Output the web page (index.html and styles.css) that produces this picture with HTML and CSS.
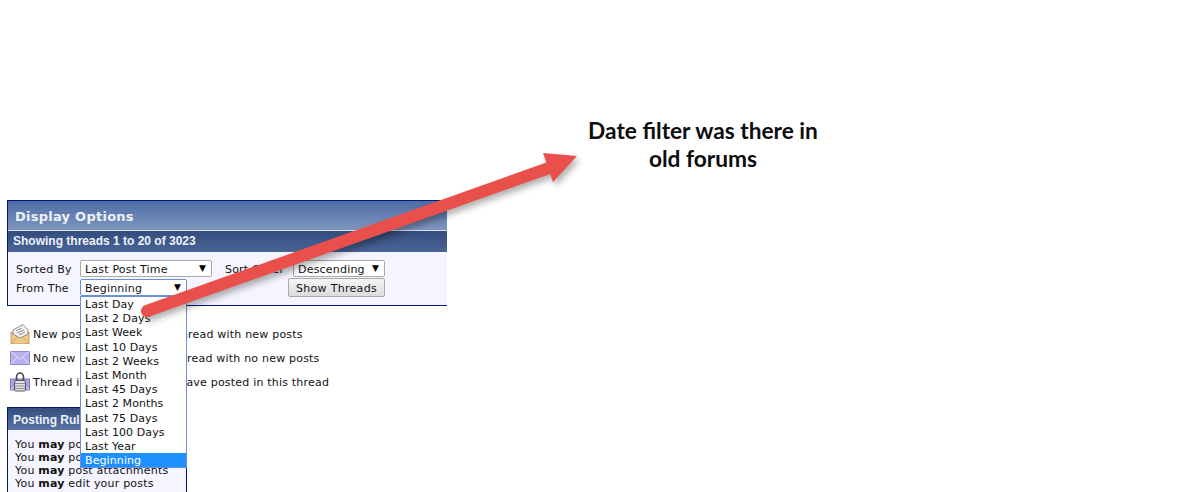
FILE: index.html
```html
<!DOCTYPE html>
<html lang="en">
<head>
  <meta charset="UTF-8" />
  <title>Display Options</title>
  <link rel="stylesheet" href="styles.css">
</head>
<body>
  <div class="page">
    <div class="panel display-options">
      <div class="panel-title">Display Options</div>
      <div class="panel-sub">Showing threads 1 to 20 of 3023</div>
      <div class="panel-body">
        <div class="form-row">
          <span class="label">Sorted By</span>
          <div class="select select-sort"><span>Last Post Time</span><span class="caret">▼</span></div>
          <span class="label label-order">Sort Order</span>
          <div class="select select-order"><span>Descending</span><span class="caret">▼</span></div>
        </div>
        <div class="form-row form-row-second">
          <span class="label">From The</span>
          <div class="select select-from"><span>Beginning</span><span class="caret">▼</span></div>
          <button class="show-btn">Show Threads</button>
        </div>
      </div>
    </div>

    <div class="legend">
      <div class="legend-row">
        <svg class="legend-icon" viewBox="0 0 20 20">
          <path d="M1 8 L10 13 L19 8 L19 20 L1 20 Z" fill="#eec98a" stroke="#b58d50" stroke-width="0.8"/>
          <path d="M3 6 L13 0.5 L18 6 L18 10 L10 14 L3 10 Z" fill="#f2f2ee" stroke="#777" stroke-width="0.8"/>
          <path d="M6 7 L12 4 M7 9 L14 6 M9 11 L15 8" stroke="#8a8a8a" stroke-width="1"/>
          <path d="M1 20 L8 12 M19 20 L12 12" stroke="#c9a263" stroke-width="0.8"/>
        </svg>
        <span class="legend-key">New posts</span>
        <span>Thread with new posts</span>
      </div>
      <div class="legend-row">
        <svg class="legend-icon" viewBox="0 0 20 14">
          <rect x="0.5" y="0.5" width="19" height="13" fill="#b7b2ee" stroke="#8f8ad6"/>
          <path d="M0.5 0.5 L10 8 L19.5 0.5 M0.5 13.5 L7 6 M19.5 13.5 L13 6" fill="none" stroke="#e4e2fb" stroke-width="0.9"/>
        </svg>
        <span class="legend-key legend-key-none">No new</span>
        <span>Thread with no new posts</span>
      </div>
      <div class="legend-row">
        <svg class="legend-icon" viewBox="0 0 20 20">
          <rect x="0.5" y="7" width="19" height="11" fill="#a9a5e6" stroke="#7d79c4"/>
          <path d="M0.5 18 L7 12 M19.5 18 L13 12" fill="none" stroke="#e4e2fb" stroke-width="0.8"/>
          <path d="M6.5 10 V5 A3.5 4 0 0 1 13.5 5 V10" fill="none" stroke="#444" stroke-width="1.6"/>
          <rect x="4.5" y="8.5" width="11" height="10.5" rx="1.5" fill="#e4e4e4" stroke="#555"/>
          <path d="M5 11.5 H15 M5 14 H15 M5 16.5 H15" stroke="#8c8c8c"/>
        </svg>
        <span class="legend-key legend-key-own">Thread is yours</span>
        <span>You have posted in this thread</span>
      </div>
    </div>

    <div class="panel posting-rules">
      <div class="rules-title">Posting Rules</div>
      <div class="rules-body">
        <div>You <b>may</b> post new threads</div>
        <div>You <b>may</b> post replies</div>
        <div>You <b>may</b> post attachments</div>
        <div>You <b>may</b> edit your posts</div>
      </div>
    </div>

    <ul class="dropdown">
      <li>Last Day</li>
      <li>Last 2 Days</li>
      <li>Last Week</li>
      <li>Last 10 Days</li>
      <li>Last 2 Weeks</li>
      <li>Last Month</li>
      <li>Last 45 Days</li>
      <li>Last 2 Months</li>
      <li>Last 75 Days</li>
      <li>Last 100 Days</li>
      <li>Last Year</li>
      <li class="selected">Beginning</li>
    </ul>

    <svg class="arrow" viewBox="0 0 1187 492">
      <path d="M147 311 L549 168" stroke="#e94f4b" stroke-width="12" stroke-linecap="round"/>
      <path d="M577 156 L543 153 L553 182 Z" fill="#e94f4b"/>
    </svg>

    <div class="note">Date filter was there in<br>old forums</div>
  </div>
</body>
</html>
```

FILE: styles.css
```css
html, body {
  margin: 0;
  background-color: #ffffff;
}

.page {
  position: relative;
  height: 492px;
  overflow: hidden;
  padding: 200px 0 0 7px;
  box-sizing: border-box;
  font-family: 'DejaVu Sans', Verdana, sans-serif;
  font-size: 11px;
  letter-spacing: 0.2px;
  color: #111;
}

.panel {
  box-sizing: border-box;
  background-color: #f5f5ff;
  border: 1px solid #00187a;
}

.display-options {
  width: 440px;
  height: 106px;
  border-right: none;
}

.panel-title {
  height: 29px;
  line-height: 31px;
  padding-left: 7px;
  font-size: 13px;
  font-weight: bold;
  letter-spacing: 0.25px;
  color: #eef1f8;
  background: linear-gradient(#4d6ca7, #7f96bd);
  border-bottom: 1px solid #dfe5f0;
}

.panel-sub {
  height: 21px;
  line-height: 21px;
  padding-left: 5px;
  font-family: 'Liberation Sans', Arial, sans-serif;
  font-size: 12px;
  font-weight: bold;
  letter-spacing: 0;
  color: #eef1f8;
  background: linear-gradient(#344d7e, #4a6496);
}

.panel-body {
  padding: 8px 0 0 8px;
}

.form-row {
  display: flex;
  align-items: center;
  height: 17px;
}

.form-row-second {
  margin-top: 2px;
}

.label {
  width: 64px;
  padding-top: 2px;
}

.label-order {
  width: 68px;
  margin-left: 13px;
}

.select {
  display: flex;
  justify-content: space-between;
  align-items: center;
  box-sizing: border-box;
  height: 17px;
  padding: 2px 5px 0 4px;
  background-color: #ffffff;
  border: 1px solid #a9a9a9;
  border-radius: 2px;
}

.select-sort {
  width: 132px;
}

.select-order {
  width: 92px;
}

.select-from {
  width: 107px;
  border-color: #6d8fd8;
}

.caret {
  font-size: 9px;
  line-height: 9px;
  margin-top: -3px;
  color: #000;
}

.show-btn {
  width: 97px;
  height: 19px;
  margin-left: 101px;
  padding: 2px 0 0;
  font-family: inherit;
  font-size: 11px;
  letter-spacing: 0.3px;
  color: #111;
  background: linear-gradient(#f6f6f6, #dcdcdc);
  border: 1px solid #a9a9a9;
  border-radius: 2px;
}

.legend {
  margin: 16px 0 0 3px;
}

.legend-row {
  display: flex;
  align-items: center;
  height: 24px;
}

.legend-icon {
  width: 20px;
  height: 20px;
  margin-right: 3px;
}

.legend-key {
  width: 141px;
}

.legend-key-none {
  width: 140px;
}

.legend-key-own {
  width: 123px;
}

.posting-rules {
  width: 180px;
  height: 120px;
  margin-top: 13px;
}

.rules-title {
  height: 22px;
  line-height: 24px;
  padding-left: 5px;
  font-family: 'Liberation Sans', Arial, sans-serif;
  font-size: 12px;
  font-weight: bold;
  letter-spacing: 0;
  color: #eef1f8;
  background: linear-gradient(#344d7e, #5a74a6);
}

.rules-body {
  padding: 8px 0 0 7px;
  line-height: 13px;
}

.dropdown {
  position: absolute;
  left: 80px;
  top: 296px;
  width: 107px;
  box-sizing: border-box;
  margin: 0;
  padding: 0;
  list-style: none;
  letter-spacing: 0.1px;
  background-color: #ffffff;
  border: 1px solid #6d8fd8;
}

.dropdown li {
  height: 14.2px;
  line-height: 16px;
  padding-left: 4px;
}

.dropdown .selected {
  color: #ffffff;
  background-color: #1e90ff;
}

.arrow {
  position: absolute;
  left: 0;
  top: 0;
  width: 1187px;
  height: 492px;
  filter: drop-shadow(3px 4px 3px rgba(0, 0, 0, 0.3));
}

.note {
  position: absolute;
  left: 563px;
  top: 117px;
  width: 280px;
  text-align: center;
  font-family: Lato, 'Open Sans', sans-serif;
  font-size: 22.7px;
  font-weight: bold;
  letter-spacing: 0;
  line-height: 28px;
  color: #0d0d0d;
}
```
